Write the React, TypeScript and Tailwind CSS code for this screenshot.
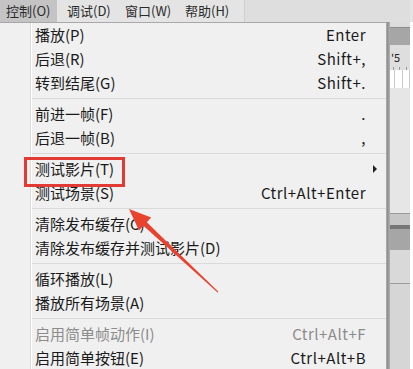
import React from 'react';

type Item =
  | { kind: 'sep' }
  | { kind: 'item'; label: string; keys?: string; sub?: boolean; disabled?: boolean };

const items: Item[] = [
  { kind: 'item', label: '播放(P)', keys: 'Enter' },
  { kind: 'item', label: '后退(R)', keys: 'Shift+,' },
  { kind: 'item', label: '转到结尾(G)', keys: 'Shift+.' },
  { kind: 'sep' },
  { kind: 'item', label: '前进一帧(F)', keys: '.' },
  { kind: 'item', label: '后退一帧(B)', keys: ',' },
  { kind: 'sep' },
  { kind: 'item', label: '测试影片(T)', sub: true },
  { kind: 'item', label: '测试场景(S)', keys: 'Ctrl+Alt+Enter' },
  { kind: 'sep' },
  { kind: 'item', label: '清除发布缓存(C)' },
  { kind: 'item', label: '清除发布缓存并测试影片(D)' },
  { kind: 'sep' },
  { kind: 'item', label: '循环播放(L)' },
  { kind: 'item', label: '播放所有场景(A)' },
  { kind: 'sep' },
  { kind: 'item', label: '启用简单帧动作(I)', keys: 'Ctrl+Alt+F', disabled: true },
  { kind: 'item', label: '启用简单按钮(E)', keys: 'Ctrl+Alt+B' },
];

const font = { fontFamily: '"Noto Sans CJK SC", "Noto Sans", sans-serif' };

export default function App() {
  return (
    <div className="relative w-[413px] h-[369px] overflow-hidden bg-white" style={font}>
      {/* top menu bar */}
      <div className="flex h-[22px] bg-[#e4e4e4] text-[13px] text-[#2a2a2a] leading-[22px] whitespace-nowrap">
        <div className="w-[57px] bg-[#c4c4c4] pl-[6px]">控制(O)</div>
        <div className="w-[68px] pl-[10px]">调试(D)</div>
        <div className="w-[60px]">窗口(W)</div>
        <div className="w-[59px]">帮助(H)</div>
        <div className="flex-1 border-l border-[#cfcfcf] bg-[#dedede] mr-[3px]" />
      </div>

      <div className="flex h-[347px]">
        {/* dropdown */}
        <div className="w-[387px] bg-[#f0f0f0] border-t border-r border-[#a8a8a8] flex">
          <div className="w-[31px] border-r border-[#dcdcdc]" />
          <div className="flex-1 border-l border-white">
            {items.map((it, i) =>
              it.kind === 'sep' ? (
                <div key={i} className="h-[7px] flex items-center">
                  <div className="w-full h-px bg-[#d9d9d9]" />
                </div>
              ) : (
                <div
                  key={i}
                  className={`h-[24px] flex items-center pl-[3px] pr-[20px] text-[15px] ${
                    it.disabled ? 'text-[#8c8c8c]' : 'text-[#1a1a1a]'
                  }`}
                >
                  <span className="flex-1 whitespace-nowrap">{it.label}</span>
                  {it.keys && <span className="whitespace-nowrap tracking-[0.5px]">{it.keys}</span>}
                  {it.sub && (
                    <span className="mr-[-11px] w-0 h-0 border-y-[4px] border-y-transparent border-l-[4px] border-l-[#222]" />
                  )}
                </div>
              )
            )}
          </div>
        </div>

        {/* menu shadow */}
        <div className="w-[3px] bg-gradient-to-r from-[#8a8a8a] to-[#b0b0b0]" />

        {/* background app panels */}
        <div className="w-[20px] flex flex-col">
          <div className="h-[5px] bg-[#dcdcdc]" />
          <div className="h-[18px] bg-[#a6a6a6] border-t border-[#8c8c8c]" />
          <div className="h-[25px] bg-[#dedede] relative text-[11px] text-[#222] leading-none">
            <span className="absolute left-[1px] top-[7px]">'5</span>
            <div className="absolute bottom-0 left-0 right-0 flex justify-around h-[3px]">
              <div className="w-px bg-[#999]" />
              <div className="w-px bg-[#999]" />
              <div className="w-px bg-[#999]" />
            </div>
          </div>
          <div className="h-[18px] bg-white flex">
            <div className="w-[5px] border-r border-[#ccc]" />
            <div className="w-[8px] border-r border-[#ccc]" />
            <div className="flex-1 border-r border-[#ccc]" />
          </div>
          <div className="h-[125px] bg-[#e6e6e6]" />
          <div className="h-[12px] bg-[#c6c6c6] border-t border-[#9a9a9a]" />
          <div className="h-[4px] bg-[#767676]" />
          <div className="h-[21px] bg-[#a6a6a6]" />
          <div className="h-[33px] bg-[#d9d9d9]" />
          <div className="flex-1 bg-[#d6d6d6] border-t border-[#9c9c9c]" />
        </div>
        <div className="flex-1 bg-white" />
      </div>

      {/* red highlight box */}
      <div className="absolute left-[24px] top-[157px] w-[101px] h-[30px] border-[3px] border-[#e23b35]" />

      {/* red arrow */}
      <svg className="absolute left-0 top-0" width="413" height="369" viewBox="0 0 413 369">
        <polygon
          points="129,209 151.2,217.4 146.8,222.2 218.4,291.8 217.6,292.4 143.4,225.8 139,230.6"
          fill="#e8432f"
        />
      </svg>
    </div>
  );
}
